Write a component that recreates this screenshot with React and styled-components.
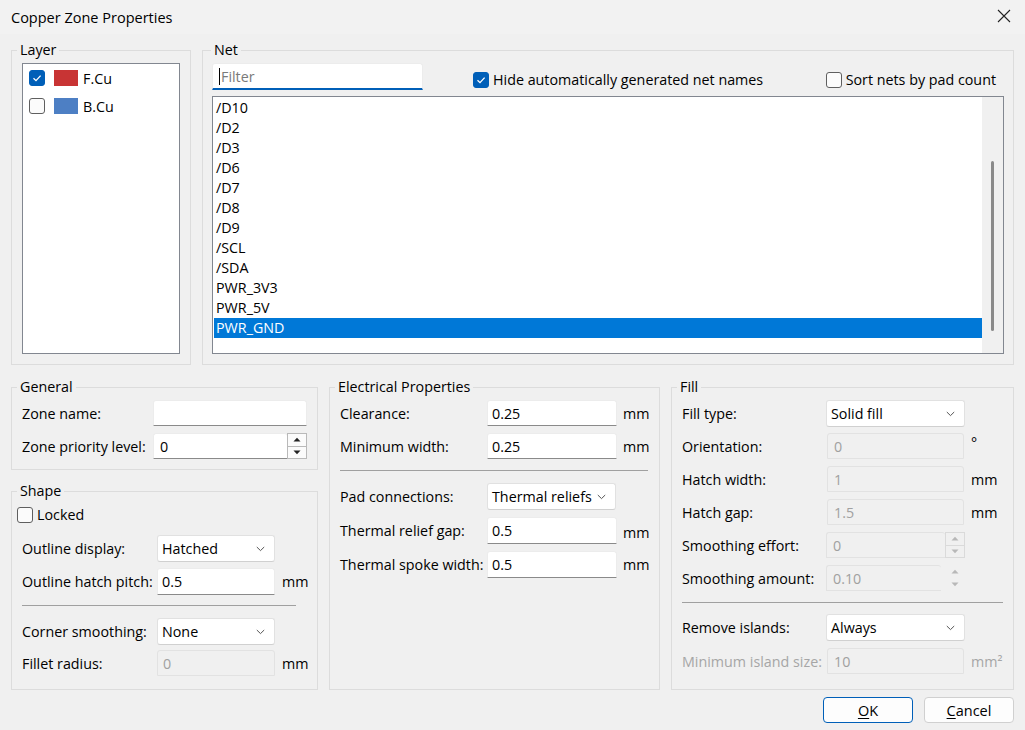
import React from "react";
import styled, { createGlobalStyle } from "styled-components";

const GlobalStyle = createGlobalStyle`
  html, body { margin: 0; padding: 0; background: #f0f0f0; }
  body {
    font-family: "Open Sans", "Noto Sans", "Liberation Sans", sans-serif;
    font-size: 14.3px;
    color: #000;
  }
  * { box-sizing: border-box; }
`;

const Window = styled.div`
  width: 1025px;
  height: 730px;
  background: #f0f0f0;
  display: flex;
  flex-direction: column;
  overflow: hidden;
`;

const TitleBar = styled.div`
  height: 34px;
  display: flex;
  align-items: center;
  justify-content: space-between;
  padding: 0 14px 0 11px;
  background: #f2f2f2;
  font-size: 14.5px;
`;

const CloseBtn = styled.div`
  display: flex;
  align-items: center;
  margin-top: -2px;
`;

const Body = styled.div`
  flex: 1;
  display: flex;
  flex-direction: column;
  padding: 6px 11px 0 11px;
`;

const TopRow = styled.div`
  display: flex;
  gap: 11px;
  height: 325px;
`;

const BottomRow = styled.div`
  display: flex;
  gap: 11px;
  margin-top: 12px;
  height: 313px;
`;

const Column = styled.div`
  display: flex;
  flex-direction: column;
  gap: 11px;
  width: ${(p) => p.$w}px;
`;

const Group = styled.fieldset`
  margin: 0;
  padding: ${(p) => p.$pad || "3px 10px 10px 10px"};
  border: 1px solid #dcdcdc;
  min-width: 0;
  display: flex;
  flex-direction: column;
  width: ${(p) => (p.$w ? `${p.$w}px` : "auto")};
  flex: ${(p) => (p.$grow ? "1" : "none")};
`;

const Legend = styled.legend`
  padding: 0 3px;
  margin-left: ${(p) => p.$offset ?? -5}px;
  line-height: 20px;
  font-size: 14.3px;
`;

/* ---------- Layer list ---------- */
const LayerList = styled.div`
  flex: 1;
  background: #fff;
  border: 1px solid #828790;
  padding: 6px;
  display: flex;
  flex-direction: column;
  gap: 12px;
`;

const LayerRow = styled.div`
  display: flex;
  align-items: center;
  height: 16px;
`;

const Swatch = styled.span`
  width: 24px;
  height: 16px;
  background: ${(p) => p.$color};
  margin-left: 9px;
  margin-right: 5px;
`;

/* ---------- Checkbox ---------- */
const Box = styled.span`
  width: 16px;
  height: 16px;
  border-radius: 3px;
  flex: none;
  display: inline-flex;
  align-items: center;
  justify-content: center;
  background: ${(p) => (p.$checked ? "#005fb8" : "#fbfbfb")};
  border: 1px solid ${(p) => (p.$checked ? "#005fb8" : "#5f5f5f")};
`;

const CheckLabel = styled.label`
  display: inline-flex;
  align-items: center;
  gap: 4px;
  white-space: nowrap;
  margin-left: ${(p) => p.$ml || "0"};
  margin-top: ${(p) => p.$mt || "0"};
`;

function Checkbox({ checked }) {
  return (
    <Box $checked={checked}>
      {checked && (
        <svg width="10" height="10" viewBox="0 0 10 10">
          <path d="M1.5 5.2 L4 7.6 L8.6 2.6" fill="none" stroke="#fff" strokeWidth="1.3" />
        </svg>
      )}
    </Box>
  );
}

/* ---------- Net area ---------- */
const NetHeader = styled.div`
  display: flex;
  align-items: center;
  height: 27px;
  padding-right: 8px;
`;

const FilterBox = styled.div`
  width: 211px;
  height: 27px;
  background: #fff;
  border: 1px solid #ececec;
  border-bottom: 2px solid #005fb8;
  border-radius: 3px 3px 0 0;
  display: flex;
  align-items: center;
  padding-left: 6px;
  color: #7a7a7a;
`;

const Caret = styled.span`
  width: 1px;
  height: 17px;
  background: #000;
  margin-right: 1px;
`;

const NetList = styled.div`
  flex: 1;
  margin-top: 6px;
  background: #fff;
  border: 1px solid #828790;
  display: flex;
`;

const NetItems = styled.div`
  flex: 1;
  padding: 1px 0 0 1px;
  display: flex;
  flex-direction: column;
`;

const NetItem = styled.div`
  height: 20px;
  line-height: 20px;
  padding-left: 2px;
  background: ${(p) => (p.$sel ? "#0078d7" : "transparent")};
  color: ${(p) => (p.$sel ? "#fff" : "#000")};
`;

const ScrollTrack = styled.div`
  width: 21px;
  background: #f0f0f0;
  display: flex;
  justify-content: center;
  padding-top: 64px;
`;

const ScrollThumb = styled.div`
  width: 3px;
  height: 170px;
  border-radius: 2px;
  background: #8a8a8a;
`;

/* ---------- Forms ---------- */
const Form = styled.div`
  display: flex;
  flex-direction: column;
  gap: ${(p) => p.$gap ?? 7}px;
  padding-left: ${(p) => p.$pl ?? 0}px;
  margin-top: ${(p) => p.$mt ?? 0}px;
`;

const Row = styled.div`
  display: grid;
  grid-template-columns: ${(p) => p.$label}px ${(p) => p.$ctrl}px auto;
  column-gap: ${(p) => p.$ugap ?? 6}px;
  align-items: center;
  height: ${(p) => p.$h ?? 26}px;
`;

const Label = styled.span`
  white-space: nowrap;
  margin-right: -${(p) => p.$ugap ?? 6}px;
  color: ${(p) => (p.$disabled ? "#a6a6a6" : "#000")};
`;

const Unit = styled.span`
  white-space: nowrap;
  color: ${(p) => (p.$disabled ? "#a6a6a6" : "#000")};
  margin-top: ${(p) => p.$mt || "0"};
`;

const TextInput = styled.div`
  height: ${(p) => p.$h ?? 26}px;
  display: flex;
  align-items: center;
  padding-left: ${(p) => p.$pl ?? 4}px;
  margin-left: ${(p) => p.$ml ?? 0}px;
  width: ${(p) => (p.$w ? `${p.$w}px` : "auto")};
  background: ${(p) => (p.$disabled ? "#f0f0f0" : "#fff")};
  border: 1px solid ${(p) => (p.$disabled ? "#e2e2e2" : "#ececec")};
  border-bottom-color: ${(p) => (p.$disabled ? "#e2e2e2" : "#8a8a8a")};
  border-radius: 3px 3px 0 0;
  color: ${(p) => (p.$disabled ? "#a0a0a0" : "#000")};
`;

const SpinWrap = styled.div`
  display: flex;
  align-items: stretch;
  height: 26px;
`;

const SpinInput = styled(TextInput)`
  flex: 1;
  border-right: none;
`;

const SpinButtons = styled.div`
  width: 20px;
  margin-left: ${(p) => p.$gap ?? 0}px;
  display: flex;
  flex-direction: column;
  border: 1px solid ${(p) => (p.$noBorder ? "transparent" : p.$disabled ? "#dadada" : "#b9b9b9")};
  background: ${(p) => (p.$disabled ? "#f0f0f0" : "#fbfbfb")};
`;

const SpinHalf = styled.div`
  flex: 1;
  display: flex;
  align-items: center;
  justify-content: center;
  border-top: ${(p) => (p.$bottom ? `1px solid ${p.$line}` : "none")};
`;

function Spin({ value, disabled, noBorder, gap }) {
  const col = disabled ? "#b8b8b8" : "#222";
  const line = noBorder ? "transparent" : disabled ? "#dadada" : "#b9b9b9";
  return (
    <SpinWrap>
      <SpinInput $disabled={disabled} $pl={6}>{value}</SpinInput>
      <SpinButtons $disabled={disabled} $noBorder={noBorder} $gap={gap}>
        <SpinHalf>
          <svg width="8" height="5" viewBox="0 0 8 5">
            <path d="M0.5 4.5 L4 0.8 L7.5 4.5 Z" fill={col} />
          </svg>
        </SpinHalf>
        <SpinHalf $bottom $line={line}>
          <svg width="8" height="5" viewBox="0 0 8 5">
            <path d="M0.5 0.5 L4 4.2 L7.5 0.5 Z" fill={col} />
          </svg>
        </SpinHalf>
      </SpinButtons>
    </SpinWrap>
  );
}

const ComboBox = styled.div`
  height: 27px;
  display: flex;
  align-items: center;
  justify-content: space-between;
  padding: 0 9px 0 4px;
  background: #fff;
  border: 1px solid #e1e1e1;
  border-bottom-color: #d0d0d0;
  border-radius: 3px;
`;

function Combo({ value }) {
  return (
    <ComboBox>
      <span>{value}</span>
      <svg width="9" height="6" viewBox="0 0 9 6">
        <path d="M0.8 1 L4.5 4.6 L8.2 1" fill="none" stroke="#555" strokeWidth="1" />
      </svg>
    </ComboBox>
  );
}

const Separator = styled.div`
  height: 1px;
  background: #a0a0a0;
  margin: ${(p) => p.$m};
`;

const ButtonRow = styled.div`
  display: flex;
  justify-content: flex-end;
  gap: 11px;
  margin-top: 7px;
`;

const Button = styled.button`
  width: 90px;
  height: 26px;
  font-family: inherit;
  font-size: 14.5px;
  background: #fdfdfd;
  border: 1px solid ${(p) => (p.$default ? "#005fb8" : "#d0d0d0")};
  border-radius: 4px;
  color: #000;
  padding: 0;
  u { text-decoration-thickness: 1px; text-underline-offset: 2px; }
`;

const nets = ["/D10", "/D2", "/D3", "/D6", "/D7", "/D8", "/D9", "/SCL", "/SDA", "PWR_3V3", "PWR_5V", "PWR_GND"];

export default function App() {
  return (
    <>
      <GlobalStyle />
      <Window>
        <TitleBar>
          <span>Copper Zone Properties</span>
          <CloseBtn>
            <svg width="14" height="14" viewBox="0 0 14 14">
              <path d="M1 1 L13 13 M13 1 L1 13" stroke="#222" strokeWidth="1.1" />
            </svg>
          </CloseBtn>
        </TitleBar>
        <Body>
          <TopRow>
            <Group $w={180} $pad="3px 10px 10px 10px">
              <Legend>Layer</Legend>
              <LayerList>
                <LayerRow>
                  <Checkbox checked />
                  <Swatch $color="#c83434" />
                  <span>F.Cu</span>
                </LayerRow>
                <LayerRow>
                  <Checkbox />
                  <Swatch $color="#4d7fc4" />
                  <span>B.Cu</span>
                </LayerRow>
              </LayerList>
            </Group>
            <Group $grow $pad="3px 9px 10px 9px">
              <Legend $offset={-1}>Net</Legend>
              <NetHeader>
                <FilterBox>
                  <Caret />
                  Filter
                </FilterBox>
                <CheckLabel $ml="50px" $mt="6px">
                  <Checkbox checked />
                  Hide automatically generated net names
                </CheckLabel>
                <CheckLabel $ml="auto" $mt="6px">
                  <Checkbox />
                  Sort nets by pad count
                </CheckLabel>
              </NetHeader>
              <NetList>
                <NetItems>
                  {nets.map((n) => (
                    <NetItem key={n} $sel={n === "PWR_GND"}>
                      {n}
                    </NetItem>
                  ))}
                </NetItems>
                <ScrollTrack>
                  <ScrollThumb />
                </ScrollTrack>
              </NetList>
            </Group>
          </TopRow>

          <BottomRow>
            <Column $w={307}>
              <Group $pad="3px 10px 10px 10px">
                <Legend>General</Legend>
                <Form>
                  <Row $label={125} $ctrl={154}>
                    <Label>Zone name:</Label>
                    <TextInput />
                  </Row>
                  <Row $label={125} $ctrl={154}>
                    <Label>Zone priority level:</Label>
                    <Spin value="0" />
                  </Row>
                </Form>
              </Group>
              <Group $grow $pad="3px 10px 12px 5px">
                <Legend $offset={0}>Shape</Legend>
                <CheckLabel $mt="1px">
                  <Checkbox />
                  Locked
                </CheckLabel>
                <Form $pl={5} $gap={6} $mt={11}>
                  <Row $label={128} $ctrl={118} $ugap={7} $h={27}>
                    <Label $ugap={7}>Outline display:</Label>
                    <Combo value="Hatched" />
                  </Row>
                  <Row $label={128} $ctrl={118} $ugap={7} $h={27}>
                    <Label $ugap={7}>Outline hatch pitch:</Label>
                    <TextInput $h={27}>0.5</TextInput>
                    <Unit>mm</Unit>
                  </Row>
                  <Separator $m="4px 11px 6px 0" />
                  <Row $label={128} $ctrl={118} $ugap={7}>
                    <Label $ugap={7}>Corner smoothing:</Label>
                    <Combo value="None" />
                  </Row>
                  <Row $label={128} $ctrl={118} $ugap={7}>
                    <Label $ugap={7}>Fillet radius:</Label>
                    <TextInput $disabled $pl={5}>0</TextInput>
                    <Unit>mm</Unit>
                  </Row>
                </Form>
              </Group>
            </Column>

            <Group $w={331} $pad="3px 11px 10px 10px">
              <Legend>Electrical Properties</Legend>
              <Form>
                <Row $label={141} $ctrl={130}>
                  <Label>Clearance:</Label>
                  <TextInput>0.25</TextInput>
                  <Unit>mm</Unit>
                </Row>
                <Row $label={141} $ctrl={130}>
                  <Label>Minimum width:</Label>
                  <TextInput>0.25</TextInput>
                  <Unit>mm</Unit>
                </Row>
                <Separator $m="4px 0 5px 0" />
                <Row $label={141} $ctrl={129} $h={27}>
                  <Label>Pad connections:</Label>
                  <Combo value="Thermal reliefs" />
                </Row>
                <Row $label={141} $ctrl={130} $h={27}>
                  <Label>Thermal relief gap:</Label>
                  <TextInput $h={27}>0.5</TextInput>
                  <Unit $mt="4px">mm</Unit>
                </Row>
                <Row $label={141} $ctrl={130} $h={27}>
                  <Label>Thermal spoke width:</Label>
                  <TextInput $h={27}>0.5</TextInput>
                  <Unit>mm</Unit>
                </Row>
              </Form>
            </Group>

            <Group $grow $pad="3px 10px 10px 10px">
              <Legend>Fill</Legend>
              <Form>
                <Row $label={138} $ctrl={139}>
                  <Label>Fill type:</Label>
                  <Combo value="Solid fill" />
                </Row>
                <Row $label={138} $ctrl={139}>
                  <Label>Orientation:</Label>
                  <TextInput $disabled $ml={1} $w={137} $pl={6}>0</TextInput>
                  <Unit $mt="-8px">°</Unit>
                </Row>
                <Row $label={138} $ctrl={139}>
                  <Label>Hatch width:</Label>
                  <TextInput $disabled $ml={1} $w={137} $pl={6}>1</TextInput>
                  <Unit>mm</Unit>
                </Row>
                <Row $label={138} $ctrl={139}>
                  <Label>Hatch gap:</Label>
                  <TextInput $disabled $ml={1} $w={137} $pl={6}>1.5</TextInput>
                  <Unit>mm</Unit>
                </Row>
                <Row $label={138} $ctrl={139}>
                  <Label>Smoothing effort:</Label>
                  <Spin value="0" disabled />
                </Row>
                <Row $label={138} $ctrl={139}>
                  <Label>Smoothing amount:</Label>
                  <Spin value="0.10" disabled noBorder gap={4} />
                </Row>
                <Separator $m="4px 0 4px 0" />
                <Row $label={138} $ctrl={139} $h={27}>
                  <Label>Remove islands:</Label>
                  <Combo value="Always" />
                </Row>
                <Row $label={138} $ctrl={139}>
                  <Label $disabled>Minimum island size:</Label>
                  <TextInput $disabled $ml={1} $w={137} $pl={6}>10</TextInput>
                  <Unit $disabled>mm²</Unit>
                </Row>
              </Form>
            </Group>
          </BottomRow>

          <ButtonRow>
            <Button $default>
              <u>O</u>K
            </Button>
            <Button>
              <u>C</u>ancel
            </Button>
          </ButtonRow>
        </Body>
      </Window>
    </>
  );
}
